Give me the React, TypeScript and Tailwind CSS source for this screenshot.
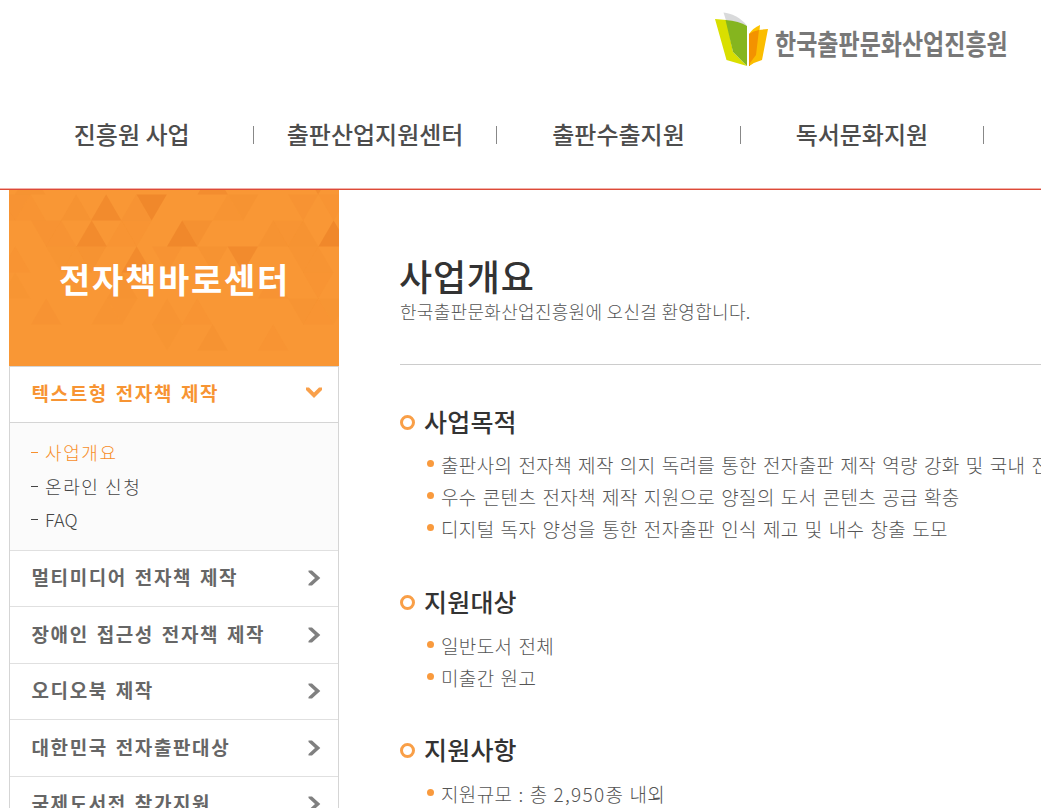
const navItems = ["진흥원 사업", "출판산업지원센터", "출판수출지원", "독서문화지원"];

const subItems = ["사업개요", "온라인 신청", "FAQ"];

const menuItems = [
  "멀티미디어 전자책 제작",
  "장애인 접근성 전자책 제작",
  "오디오북 제작",
  "대한민국 전자출판대상",
  "국제도서전 참가지원",
];

const sections = [
  {
    title: "사업목적",
    items: [
      "출판사의 전자책 제작 의지 독려를 통한 전자출판 제작 역량 강화 및 국내 전자출판",
      "우수 콘텐츠 전자책 제작 지원으로 양질의 도서 콘텐츠 공급 확충",
      "디지털 독자 양성을 통한 전자출판 인식 제고 및 내수 창출 도모",
    ],
  },
  { title: "지원대상", items: ["일반도서 전체", "미출간 원고"] },
  { title: "지원사항", items: ["지원규모 : 총 2,950종 내외"] },
];

// banner pattern: [left, row, points up, opacity]
const triangles: [number, number, boolean, number][] = [
  [6, 0, true, 0.25],
  [188.5, 0, true, 0.6],
  [294, 0, false, 0.6],
  [-24, 1, true, 0.18],
  [-9, 1, false, 0.18],
  [6.5, 1, true, 0.15],
  [52, 1, true, 0.28],
  [82, 1, true, 0.75],
  [112, 1, true, 0.18],
  [127.5, 1, false, 0.95],
  [203.5, 1, true, 0.12],
  [219, 1, false, 0.22],
  [279, 1, false, 0.2],
  [309.5, 1, false, 0.15],
  [22, 2, false, 0.18],
  [37, 2, true, 0.18],
  [67.5, 2, true, 0.75],
  [97.5, 2, true, 0.15],
  [112.5, 2, false, 0.15],
  [158, 2, true, 0.95],
  [173, 2, false, 0.35],
  [249, 2, true, 0.25],
  [264, 2, false, 0.12],
  [279, 2, true, 0.22],
  [309.5, 2, true, 0.95],
  [-9, 3, true, 0.15],
  [37, 3, false, 0.1],
  [52, 3, true, 0.1],
  [67, 3, false, 0.28],
  [112.5, 3, true, 0.75],
  [143, 3, false, 0.18],
  [188.5, 3, false, 0.28],
  [218.700, 3, false, 0.75],
  [279, 3, false, 0.12],
  [294, 3, true, 0.12],
  [-9, 4, true, 0.1],
  [98, 4, true, 0.25],
  [249, 4, true, 0.2],
  [294, 4, false, 0.15],
  [22, 5, true, 0.2],
  [82.5, 5, true, 0.12],
  [98, 5, false, 0.12],
  [143, 5, true, 0.12],
  [173, 5, true, 0.15],
  [279, 5, false, 0.12],
  [294, 5, true, 0.15],
  [309.5, 5, false, 0.1],
  [143, 6, false, 0.1],
  [188.5, 6, true, 0.25],
  [249, 6, true, 0.15],
];

const Logo = () => (
  <div className="ml-[714px] flex pt-3">
    <svg className="h-[56px] w-[56px]" viewBox="0 0 56 56">
      <path d="M9.500 0.500 C17 1 27 6 32.500 13 L28 34 L15 18Z" fill="#d9dadb" />
      <path d="M1 7 L12.500 8 L19 40 L33 54 L12.500 48Z" fill="#d9df00" />
      <path d="M11.500 8 Q25 9 33 14 V54 Q24 45 19 40Z" fill="#85b51f" />
      <path d="M35 22 Q39 16 46 13 L43 48 L35 54Z" fill="#fdc300" />
      <path d="M44 18 L54 17 L48 48 Q41 50 35 54Z" fill="#fbbd00" />
      <path d="M35 22 Q39 19 45 18 L42 43 L36 51 V54 H35Z" fill="#f39200" />
    </svg>
    <span className="ml-[5px] mt-[15px] origin-center scale-y-[1.22] whitespace-nowrap text-[23px] font-bold leading-[34px] text-[#787878]">
      한국출판문화산업진흥원
    </span>
  </div>
);

const Chevron = ({ down = false }: { down?: boolean }) =>
  down ? (
    <svg className="mr-4 mt-[-3px] h-3 w-4" viewBox="0 0 16 12">
      <path d="M0 0.500 H3 L8 5.500 L13 0.500 H16 V3 L8 11 L0 3Z" fill="#f9a04a" />
    </svg>
  ) : (
    <svg className="mr-[17px] h-4 w-[13px]" viewBox="0 0 13 16">
      <path d="M0.500 0.500 H4 L12.300 8 L4 15.500 H0.500 V14 L7 8 L0.500 2Z" fill="#808080" />
    </svg>
  );

const Banner = () => (
  <div className="relative h-[176px] overflow-hidden bg-[#f99735]">
    <svg className="absolute inset-0 h-full w-full" viewBox="0 0 330 176">
      {triangles.map(([x, row, up, opacity], i) => {
        const top = -21.500 + row * 26;
        const bottom = top + 26;
        const points = up
          ? `${x},${bottom} ${x + 30.3},${bottom} ${x + 15.15},${top}`
          : `${x},${top} ${x + 30.3},${top} ${x + 15.15},${bottom}`;
        return <polygon key={i} points={points} fill="#ef872b" opacity={opacity} />;
      })}
    </svg>
    <h2 className="relative pl-px pt-[64px] text-center text-[34px] font-bold leading-[50px] tracking-[1.7px] text-white">
      전자책바로센터
    </h2>
  </div>
);

const Sidebar = () => (
  <aside className="w-[330px] shrink-0">
    <Banner />
    <div className="border-x border-t border-[#d5d5d5]">
      <div className="flex h-14 items-center justify-between border-b border-[#d5d5d5] pl-[21.500px]">
        <span className="mt-[-2px] text-[19px] font-bold tracking-[1.6px] [word-spacing:2px] text-[#f79433]">
          텍스트형 전자책 제작
        </span>
        <Chevron down />
      </div>
      <ul className="h-[127.600px] border-b border-[#e0e0e0] bg-[#fbfbfb] pl-[21px] pt-[13px]">
        {subItems.map((item, i) => (
          <li
            key={item}
            className={`flex h-[33.500px] items-center text-[18px] font-light ${i === 0 ? "text-[#f78f2c]" : "text-[#444]"}`}
          >
            <span className="mr-[7px] h-px w-[7px] bg-current" />
            <span className={i === 2 ? "tracking-[0.1px]" : "tracking-[1.6px]"}>{item}</span>
          </li>
        ))}
      </ul>
      {menuItems.map((item) => (
        <div key={item} className="flex h-[56.500px] items-center justify-between border-b border-[#e0e0e0] pl-[21.500px]">
          <span className="mt-[-2px] text-[19px] font-bold tracking-[1.6px] [word-spacing:2px] text-[#666]">{item}</span>
          <Chevron />
        </div>
      ))}
    </div>
  </aside>
);

const Content = () => (
  <main className="ml-[61px] w-[900px] shrink-0">
    <div className="h-[175px] border-b border-[#ccc] pt-[59px]">
      <h1 className="ml-[-1px] text-[36px] font-medium leading-[52px] tracking-[0.8px] text-[#333]">사업개요</h1>
      <p className="text-[18px] font-light leading-5 tracking-[0.3px] text-[#555]">
        한국출판문화산업진흥원에 오신걸 환영합니다.
      </p>
    </div>
    <div className="pt-[37px]">
      {sections.map((section, i) => (
        <section key={section.title} className={i === 0 ? "mb-[37px]" : "mb-9"}>
          <div className="flex h-10 items-center">
            <span className="mr-[9px] h-[15px] w-[15px] rounded-full border-[3px] border-[#f99f47]" />
            <h3 className="mt-[-2px] text-[25px] font-medium leading-10 tracking-[0.2px] text-[#333]">{section.title}</h3>
          </div>
          <ul className={i === 0 ? "pl-[27px] pt-[7px]" : "pl-[27px] pt-2"}>
            {section.items.map((item) => (
              <li key={item} className="flex h-8 items-center">
                <span className="mr-[7px] mt-[-4px] h-[7px] w-[7px] shrink-0 rounded-full bg-[#f99a3d]" />
                <span className="whitespace-nowrap text-[19px] font-light tracking-[0.370px] [word-spacing:1.5px] text-[#555]">
                  {item.split(/([\d,]+)/).map((part, n) =>
                    n % 2 ? (
                      <span key={n} className="tracking-[1.300px]">
                        {part}
                      </span>
                    ) : (
                      part
                    ),
                  )}
                </span>
              </li>
            ))}
          </ul>
        </section>
      ))}
    </div>
  </main>
);

const App = () => {
  return (
    <div className="h-[808px] w-[1041px] overflow-hidden bg-white font-['Noto_Sans_CJK_KR',sans-serif]">
      <header className="h-[190px] border-b border-[#dc4a38] shadow-[inset_0_-1px_0_#f3b0a8]">
        <div className="h-[100px]">
          <Logo />
        </div>
        <nav className="ml-[10.500px] flex h-[70px] items-center">
          {navItems.map((item) => (
            <div key={item} className="flex w-[243.400px] shrink-0 items-center">
              <span className="mt-[-2px] grow text-center text-[24px] font-medium text-[#4d4d4d]">{item}</span>
              <span className="h-[18px] w-px bg-[#888]" />
            </div>
          ))}
        </nav>
      </header>
      <div className="flex pl-[9px]">
        <Sidebar />
        <Content />
      </div>
    </div>
  );
};

export default App;
